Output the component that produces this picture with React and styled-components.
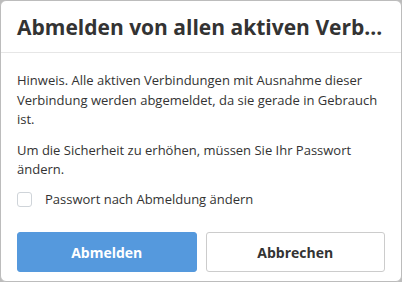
import React from 'react';
import styled, { createGlobalStyle } from 'styled-components';

const GlobalStyle = createGlobalStyle`
  html, body {
    margin: 0;
    background: #bcbcbc;
    font-family: "Open Sans", "Noto Sans", sans-serif;
  }
`;

const Dialog = styled.div`
  box-sizing: border-box;
  width: 402px;
  height: 282px;
  background: #fff;
  border: 1px solid #bcbcbc;
  border-radius: 6px;
  display: flex;
  flex-direction: column;
  overflow: hidden;
`;

const Header = styled.div`
  height: 51px;
  padding: 0 16px;
  display: flex;
  align-items: center;
  border-bottom: 1px solid #e6e6e6;
`;

const Title = styled.h1`
  margin: 0;
  font-size: 21px;
  font-weight: 700;
  color: #333;
  white-space: nowrap;
`;

const Body = styled.div`
  padding: 18px 16px 0;
  color: #333;
  font-size: 13px;
  line-height: 19.5px;
`;

const Text = styled.p`
  margin: 0 0 11px;
  &:last-of-type {
    margin-bottom: 0;
  }
`;

const CheckRow = styled.label`
  margin-top: 10px;
  display: flex;
  align-items: center;
  gap: 13px;
  cursor: pointer;
`;

const Box = styled.span`
  box-sizing: border-box;
  width: 15px;
  height: 15px;
  border: 1px solid #cfd4d9;
  border-radius: 3px;
  background: #fff;
`;

const Actions = styled.div`
  margin-top: 23px;
  display: grid;
  grid-template-columns: 1fr 1fr;
  gap: 9px;
`;

const Button = styled.button`
  height: 40px;
  border-radius: 3px;
  font-family: inherit;
  font-size: 14px;
  font-weight: 700;
  cursor: pointer;
  border: 1px solid ${p => (p.$primary ? '#5599dd' : '#cccccc')};
  background: ${p => (p.$primary ? '#5599dd' : '#fff')};
  color: ${p => (p.$primary ? '#fff' : '#333')};
`;

export default function App() {
  return (
    <>
      <GlobalStyle />
      <Dialog>
        <Header>
          <Title>Abmelden von allen aktiven Verb...</Title>
        </Header>
        <Body>
          <Text>
            Hinweis. Alle aktiven Verbindungen mit Ausnahme dieser Verbindung werden
            abgemeldet, da sie gerade in Gebrauch ist.
          </Text>
          <Text>Um die Sicherheit zu erhöhen, müssen Sie Ihr Passwort ändern.</Text>
          <CheckRow>
            <Box />
            Passwort nach Abmeldung ändern
          </CheckRow>
          <Actions>
            <Button $primary>Abmelden</Button>
            <Button>Abbrechen</Button>
          </Actions>
        </Body>
      </Dialog>
    </>
  );
}
